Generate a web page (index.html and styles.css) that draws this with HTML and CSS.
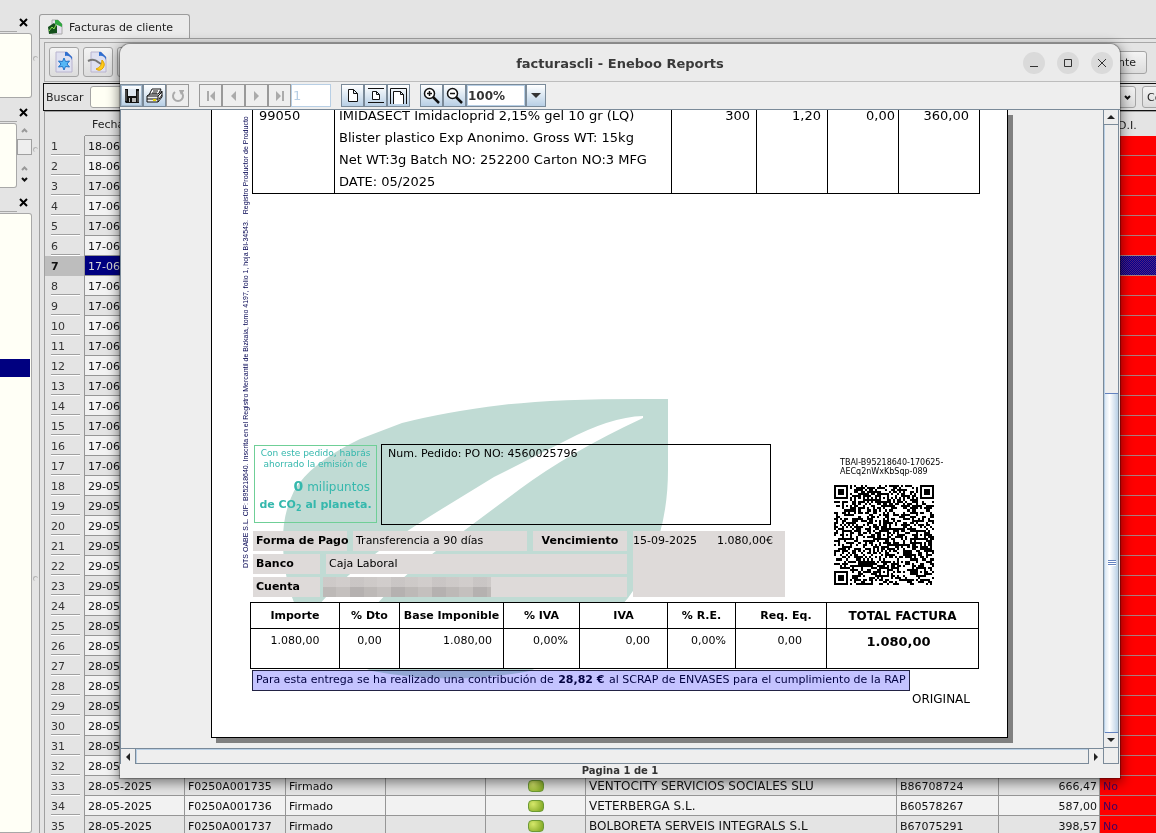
FILE: index.html
```html
<!DOCTYPE html>
<html lang="es">
<head>
<meta charset="utf-8">
<title>Facturas de cliente</title>
<link rel="stylesheet" href="styles.css">
</head>
<body>
<div class="desktop">
  <aside class="docks">
    <section class="dock dock-first">
      <header class="dock-head"><button class="dock-close" aria-label="Cerrar"><svg width="9" height="9" viewBox="0 0 9 9"><path d="M1 1l7 7M8 1l-7 7"/></svg></button></header>
      <div class="dock-row"><div class="dock-panel"></div></div>
    </section>
    <section class="dock dock-mid">
      <header class="dock-head"><button class="dock-close" aria-label="Cerrar"><svg width="9" height="9" viewBox="0 0 9 9"><path d="M1 1l7 7M8 1l-7 7"/></svg></button></header>
      <div class="dock-row">
        <div class="dock-panel"></div>
        <div class="mini-scroll">
          <svg width="7" height="5" viewBox="0 0 7 5"><path class="dim" d="M1 4l2.500-2.500L6 4"/></svg>
          <span class="mini-thumb"></span>
          <svg width="7" height="5" viewBox="0 0 7 5"><path class="dim" d="M1 4l2.500-2.500L6 4"/></svg>
          <svg width="7" height="5" viewBox="0 0 7 5"><path d="M1 1l2.500 2.500L6 1"/></svg>
        </div>
      </div>
    </section>
    <section class="dock dock-last">
      <header class="dock-head"><button class="dock-close" aria-label="Cerrar"><svg width="9" height="9" viewBox="0 0 9 9"><path d="M1 1l7 7M8 1l-7 7"/></svg></button></header>
      <div class="dock-row"><div class="dock-panel"><div class="dock-selected"></div></div></div>
    </section>
  </aside>
  <div class="splitter"><i></i><i></i><i></i></div>
  <main class="main">
    <div class="tabs">
      <button class="tab">
        <svg width="16" height="16" viewBox="0 0 16 16"><path d="M5 1h6l4 4v10H5z" fill="#e6e2ee" stroke="#aaa"/><path d="M8 1h3l4 4v3L8 5z" fill="#30a840"/><path d="M1 8l6-4 3 3v7l-8 1z" fill="#14501c"/><path d="M2 12l3-4 2 2 2-4" stroke="#8be04c" fill="none"/></svg>
        <span>Facturas de cliente</span>
      </button>
    </div>
    <div class="pane">
      <div class="actions">
        <button class="act" aria-label="Nuevo"><svg width="20" height="22" viewBox="0 0 20 22"><path d="M2 1h11l5 5v15H2z" fill="#dfe0f0" stroke="#b9b4cf"/><path d="M11 1h2l5 5v3q-2-5-7-4z" fill="#2f6fd0"/><path d="M10 7l1.500 3.500 4-.5-2.500 3 2.500 3-4-.5L10 19l-1.500-3.500-4 .5L7 13l-2.500-3 4 .5z" fill="#56b7f5" stroke="#2174c8"/></svg></button>
        <button class="act" aria-label="Editar"><svg width="22" height="22" viewBox="0 0 22 22"><path d="M4 1h10l5 5v15H4z" fill="#dfe0f0" stroke="#b9b4cf"/><path d="M12 1h2l5 5v3q-2-5-7-4z" fill="#2f6fd0"/><path d="M1 10q6-3 10 1l3 2" fill="none" stroke="#777" stroke-width="2"/><path d="M15 9q4 4 1 8t-7 1q6-2 6-9z" fill="#ffcc1c" stroke="#e0a400"/></svg></button>
        <button class="act" aria-label="Ver"></button>
        <button class="wide">nte</button>
      </div>
      <div class="search">
        <label for="buscar">Buscar</label>
        <input id="buscar" type="text">
        <button class="combo" aria-label="Campo"><svg width="7" height="5" viewBox="0 0 7 5"><path d="M1 1l2.500 2.500L6 1"/></svg></button>
        <button class="comun">Co</button>
      </div>
      <div class="grid-frame">
        <table class="records">
          <colgroup><col class="c-num"><col class="c-100"><col class="c-101"><col class="c-100"><col class="c-100"><col class="c-100"><col><col class="c-102"><col class="c-101"><col class="c-last"></colgroup>
          <thead><tr><th></th><th>Fecha</th><th></th><th></th><th></th><th></th><th></th><th></th><th></th><th class="di">D.I.</th></tr></thead>
          <tbody id="records-body"></tbody>
        </table>
      </div>
    </div>
  </main>

  <section class="window" aria-label="facturascli - Eneboo Reports">
    <header class="titlebar">
      <h1>facturascli - Eneboo Reports</h1>
      <div class="winctl">
        <button aria-label="Minimizar"><svg width="10" height="10" viewBox="0 0 10 10"><path d="M1 8.500h8"/></svg></button>
        <button aria-label="Maximizar"><svg width="10" height="10" viewBox="0 0 10 10"><path d="M1.500 1.500h7v7h-7z"/></svg></button>
        <button aria-label="Cerrar"><svg width="10" height="10" viewBox="0 0 10 10"><path d="M1 1l8 8M9 1l-8 8"/></svg></button>
      </div>
    </header>
    <div class="toolbar">
      <div class="group">
        <button class="tool focus" aria-label="Guardar"><svg width="16" height="16" viewBox="0 0 16 16"><path d="M1 1h14v14H2l-1-1z" fill="#111"/><path d="M4 1h8v7H4z" fill="#dfe7f0"/><path d="M5 10h7v4H5z" fill="#bbb"/><path d="M6 10h2v4H6z" fill="#111"/><path d="M2 2v11M14 3v11" stroke="#777"/></svg></button>
        <button class="tool" aria-label="Imprimir"><svg width="18" height="16" viewBox="0 0 18 16"><path d="M6 1h9l-3 6H3z" fill="#fff" stroke="#111"/><path d="M7 3h5M6 5h5" stroke="#111"/><path d="M1 8l3-2h8l4-3v6l-4 5H1z" fill="#eee" stroke="#111"/><path d="M1 8h11v6M12 8l4-4M1 11h11M13 11l3-4" stroke="#111" fill="none"/><path d="M7 12h3" stroke="#e5d400" stroke-width="2"/></svg></button>
        <button class="tool off" disabled aria-label="Recargar"><svg width="14" height="14" viewBox="0 0 14 14"><path d="M4 3a5 5 0 1 0 6 0" fill="none" stroke="#aaa" stroke-width="2"/><path d="M8 1h5v1l-3 4z" fill="#aaa"/></svg></button>
      </div>
      <div class="group">
        <button class="tool off" disabled aria-label="Primera"><svg width="10" height="10" viewBox="0 0 10 10"><path d="M1 0h2v10H1zM9 0v10L4 5z" fill="#aaa"/></svg></button>
        <button class="tool off" disabled aria-label="Anterior"><svg width="10" height="10" viewBox="0 0 10 10"><path d="M7 0v10L2 5z" fill="#aaa"/></svg></button>
        <button class="tool off" disabled aria-label="Siguiente"><svg width="10" height="10" viewBox="0 0 10 10"><path d="M2 0v10l5-5z" fill="#aaa"/></svg></button>
        <button class="tool off" disabled aria-label="Última"><svg width="10" height="10" viewBox="0 0 10 10"><path d="M7 0h2v10H7zM1 0v10l5-5z" fill="#aaa"/></svg></button>
        <input class="page-no" type="text" value="1" disabled aria-label="Página">
      </div>
      <div class="group">
        <button class="tool" aria-label="Tamaño real"><svg width="12" height="15" viewBox="0 0 12 15"><path d="M1.500 1.500h5l4 4v8h-9zM6.500 1.500v4h4" fill="#fff" stroke="#111"/></svg></button>
        <button class="tool" aria-label="Ajustar página"><svg width="16" height="17" viewBox="0 0 16 17"><path d="M0 1.500h16M0 15.500h16" stroke="#111"/><path d="M4.500 4.500h4l3 3v5h-7zM8.500 4.500v3h3" fill="#fff" stroke="#111"/></svg></button>
        <button class="tool" aria-label="Ajustar ancho"><svg width="17" height="17" viewBox="0 0 17 17"><path d="M.5 17V1.500h16V17" fill="none" stroke="#111"/><path d="M3.500 17V4.500h7l3 3V17M10.500 4.500v3h3" fill="#fff" stroke="#111"/></svg></button>
      </div>
      <div class="group">
        <button class="tool" aria-label="Ampliar"><svg width="17" height="17" viewBox="0 0 17 17"><circle cx="6.500" cy="6.500" r="5" fill="#fff" stroke="#111" stroke-width="1.500"/><path d="M4 6.500h5M6.500 4v5" stroke="#111" stroke-width="1.500"/><path d="M10 10l6 6" stroke="#111" stroke-width="2.500"/></svg></button>
        <button class="tool" aria-label="Reducir"><svg width="17" height="17" viewBox="0 0 17 17"><circle cx="6.500" cy="6.500" r="5" fill="#fff" stroke="#111" stroke-width="1.500"/><path d="M4 6.500h5" stroke="#111" stroke-width="1.500"/><path d="M10 10l6 6" stroke="#111" stroke-width="2.500"/></svg></button>
        <input class="zoom-val" type="text" value="100%" aria-label="Zoom">
        <button class="tool drop" aria-label="Elegir zoom"><svg width="10" height="5" viewBox="0 0 10 5"><path d="M0 0h10L5 5z" fill="#333"/></svg></button>
      </div>
    </div>

    <div class="scroll-grid">
      <div class="viewport">
        <article class="sheet">
          <svg class="leaf" width="795" height="627" viewBox="212 110 795 627" aria-hidden="true">
            <path fill="#c0dbd4" fill-rule="evenodd" d="M668 399Q560 398 502 405Q445 412 402 423L360 439Q310 463 294 491Q282 515 283 545Q284 590 305 625Q340 660 372 671Q450 686 530 671Q590 645 628 598Q668 545 668 470zM643 416Q610 417 565 441L494 477L445 507Q350 565 315 610L370 612Q400 575 465 530L520 489Q570 452 643 418z"/>
          </svg>
          <p class="registry">DTS OABE S.L. CIF: B95218640. Inscrita en el Registro Mercantil de Bizkaia, tomo 4197, folio 1, hoja BI-34543. &nbsp; Registro Productor de Producto</p>
          <div class="report">
            <table class="items">
              <colgroup><col class="i-ref"><col class="i-desc"><col class="i-qty"><col class="i-mid"><col class="i-mid"><col class="i-sum"></colgroup>
              <tbody><tr>
                <td>99050</td>
                <td class="desc">IMIDASECT Imidacloprid 2,15% gel 10 gr (LQ)<br>Blister plastico Exp Anonimo. Gross WT: 15kg<br>Net WT:3g Batch NO: 252200 Carton NO:3 MFG<br>DATE: 05/2025</td>
                <td class="num">300</td><td class="num">1,20</td><td class="num near">0,00</td><td class="num sum">360,00</td>
              </tr></tbody>
            </table>
            <div class="details">
              <div class="details-left">
                <div class="notes">
                  <div class="co2">
                    <p>Con este pedido, habrás<br>ahorrado la emisión de</p>
                    <p class="co2-val"><b>0</b> milipuntos</p>
                    <p class="co2-end">de CO<sub>2</sub> al planeta.</p>
                  </div>
                  <div class="order">Num. Pedido: PO NO: 4560025796</div>
                </div>
                <div class="payment">
                  <div class="pay-rows">
                    <div class="pay-row"><b class="cell form">Forma de Pago</b><span class="cell grow">Transferencia a 90 días</span><b class="cell due">Vencimiento</b></div>
                    <div class="pay-row"><b class="cell lab">Banco</b><span class="cell grow">Caja Laboral</span></div>
                    <div class="pay-row"><b class="cell lab">Cuenta</b><span class="cell grow account"><i class="mosaic"></i></span></div>
                  </div>
                  <div class="cell schedule"><span>15-09-2025</span><span>1.080,00€</span></div>
                </div>
              </div>
              <div class="tbai">
                <p>TBAI-B95218640-170625-<br>AECq2nWxKbSqp-089</p>
                <svg id="qr" width="100" height="100" viewBox="0 0 49 49" shape-rendering="crispEdges" role="img" aria-label="Código QR"></svg>
              </div>
            </div>
            <table class="totals">
              <colgroup><col class="t1"><col class="t2"><col class="t3"><col class="t4"><col class="t5"><col class="t6"><col class="t7"><col></colgroup>
              <thead><tr><th>Importe</th><th>% Dto</th><th>Base Imponible</th><th>% IVA</th><th>IVA</th><th>% R.E.</th><th class="req">Req. Eq.</th><th class="big">TOTAL FACTURA</th></tr></thead>
              <tbody><tr><td class="ctr">1.080,00</td><td class="ctr">0,00</td><td>1.080,00</td><td>0,00%</td><td class="iva">0,00</td><td class="re">0,00%</td><td class="rq">0,00</td><td class="grand">1.080,00</td></tr></tbody>
            </table>
            <p class="scrap">Para esta entrega se ha realizado una contribución de <b>28,82 €</b> al SCRAP de ENVASES para el cumplimiento de la RAP</p>
            <p class="original">ORIGINAL</p>
          </div>
        </article>
      </div>
      <div class="vbar">
        <button class="arrow" aria-label="Subir"><svg width="8" height="4" viewBox="0 0 8 4"><path d="M0 4h8L4 0z" fill="#222"/></svg></button>
        <div class="vtrack"><div class="vthumb"><i></i></div></div>
        <button class="arrow" aria-label="Bajar"><svg width="8" height="4" viewBox="0 0 8 4"><path d="M0 0h8L4 4z" fill="#222"/></svg></button>
      </div>
      <div class="hbar">
        <button class="arrow" aria-label="Izquierda"><svg width="4" height="8" viewBox="0 0 4 8"><path d="M4 0v8L0 4z" fill="#222"/></svg></button>
        <div class="htrack"></div>
        <button class="arrow" aria-label="Derecha"><svg width="4" height="8" viewBox="0 0 4 8"><path d="M0 0v8l4-4z" fill="#222"/></svg></button>
      </div>
      <div class="corner"></div>
    </div>
    <footer class="status">Pagina 1 de 1</footer>
  </section>
</div>
<script src="script.js"></script>
</body>
</html>
```
FILE: styles.css
```css
* { box-sizing: border-box; }
body { margin: 0; height: 100vh; overflow: hidden; background: #e4e4e4; color: #222; font: 11px "DejaVu Sans", sans-serif; }
button, input { font: inherit; color: inherit; margin: 0; padding: 0; }
button { display: flex; align-items: center; justify-content: center; border: 0; background: none; }
p, h1 { margin: 0; }
svg { flex: none; }

.desktop { position: relative; display: flex; height: 100vh; overflow: hidden; }

/* Left docks */
.docks { display: flex; flex-direction: column; width: 32px; }
.dock { display: flex; flex-direction: column; }
.dock-mid { height: 90px; }
.dock-first { height: 98px; padding-top: 8px; }
.dock-last { flex: 1; }
.dock-head { display: flex; justify-content: flex-end; align-items: center; height: 25px; padding: 4px 4px 0 0; background: linear-gradient(#a8a8a8, #a8a8a8) 0 23px / 17px 1px no-repeat; }
.dock-close path { stroke: #000; stroke-width: 2; fill: none; }
.dock-row { flex: 1; display: flex; }
.dock-panel { flex: 1; background: #fffff6; border: 1px solid #a8a8a8; border-width: 1px 1px 1px 0; border-radius: 0 3px 3px 0; }
.dock-selected { height: 18px; margin: 145px 1px 0 0; background: #000080; }
.mini-scroll { width: 15px; display: flex; flex-direction: column; align-items: center; justify-content: space-between; padding: 5px 0 6px; }
.mini-scroll path, .combo path { fill: none; stroke: #111; stroke-width: 2; }
.mini-scroll .dim { stroke: #999; }
.mini-thumb { width: 15px; height: 16px; border: 1px solid #a0a0a0; background: #eee; margin-bottom: 4px; }
.splitter { width: 7px; display: flex; flex-direction: column; }
.splitter i { width: 5px; height: 5px; border: 1px solid #b4b4b4; border-width: 1px 0 0 1px; border-radius: 3px; margin: 56px 0 30px 1px; }
.splitter i:nth-child(3) { margin-top: 394px; }

/* Main form */
.main { flex: 1; min-width: 0; display: flex; flex-direction: column; padding-top: 14px; }
.tabs { display: flex; height: 25px; margin-bottom: -1px; }
.tab { width: 151px; gap: 6px; justify-content: flex-start; padding-left: 7px; border: 1px solid #9c9c9c; border-bottom: 0; border-radius: 3px 3px 0 0; background: #ebebeb; }
.pane { flex: 1; min-height: 0; display: flex; flex-direction: column; border: 1px solid #a0a0a0; border-width: 1px 0 0 1px; padding: 3px 0 0 3px; }
.actions { display: flex; align-items: center; gap: 4px; height: 40px; border: 1px solid #a8a8a8; border-right: 0; padding: 0 9px 0 4px; margin-left: 1px; }
.act, .wide, .combo, .comun { border: 1px solid #a4a4a4; border-radius: 3px; background: linear-gradient(#f4f4f4, #dcdcdc); }
.act { width: 30px; height: 30px; }
.wide { margin-left: auto; width: 60px; height: 23px; justify-content: flex-end; padding-right: 10px; }
.search { display: flex; align-items: center; height: 28px; margin-top: 1px; border: 1px solid #111; border-right: 0; padding-left: 2px; overflow: hidden; }
.search label { width: 44px; }
.search input { flex: 1; min-width: 0; height: 22px; border: 1px solid #a4a4a4; border-radius: 3px; background: #fffff4; }
.combo { width: 36px; height: 22px; justify-content: flex-end; padding-right: 4px; }
.comun { width: 40px; height: 22px; margin: 0 -26px 0 6px; justify-content: flex-start; padding-left: 4px; }
.grid-frame { flex: 1; min-height: 0; overflow: hidden; margin: 0 0 0 1px; border: 1px solid #a0a0a0; border-width: 1px 0 0 1px; }
.records { width: 100%; table-layout: fixed; border-collapse: separate; border-spacing: 0; }
.c-num { width: 40px; } .c-100 { width: 100px; } .c-101 { width: 101px; } .c-102 { width: 102px; } .c-last { width: 56px; }
.records th { height: 24px; padding: 2px 0 0 7px; font-weight: normal; text-align: left; border-bottom: 1px solid #9a9a9a; }
.records th:first-child { border-bottom: 0; }
.records th.di { padding-left: 18px; border-bottom: 0; }
.records td { height: 20px; padding: 1px 3px 0; white-space: nowrap; color: #111; border-bottom: 1px solid #969696; border-right: 1px solid #969696; background: #e4e4e4; overflow: hidden; }
.records tr:nth-child(even) td { background: #f2f2f2; }
.records tr td:first-child, .records tr:nth-child(even) td:first-child { padding-left: 6px; color: #333; border-bottom: 0; background: linear-gradient(#a0a0a0, #a0a0a0) 6px 18px / 29px 1px no-repeat, linear-gradient(#fff, #fff) 6px 19px / 29px 1px no-repeat, #e4e4e4; }
.records tr.current td { background: #000080; color: #ddd; }
.records tr.current td:first-child { background: #bdbdbd; color: #111; font-weight: bold; }
.records td.customer { font-size: 12px; line-height: 13px; }
.records tbody td.flag, .records tr:nth-child(even) td.flag { background: #f00; color: #400060; border-bottom-color: #a88080; border-right: 0; }
.records tbody tr.current td.flag { background: repeating-conic-gradient(#000090 0 25%, #502080 0 50%) 0 0 / 2px 2px; }
.records .amount { text-align: right; padding-right: 2px; }
.pill { display: block; width: 16px; height: 12px; margin: auto; border: 1px solid #6c9a34; border-radius: 4px; background: radial-gradient(circle at 30% 30%, #d6e86a, #8aae2c 80%); }

/* Report window */
.window { position: absolute; left: 120px; right: 36px; top: 44px; bottom: 55px; display: flex; flex-direction: column; background: #eee; border-radius: 10px 10px 0 0; box-shadow: 0 0 1px 1px rgba(0,0,0,.3), 0 3px 12px 2px rgba(0,0,0,.45); overflow: hidden; }
.titlebar { position: relative; display: flex; align-items: center; justify-content: center; height: 38px; padding-top: 2px; border-bottom: 1px solid #bdbdbd; background: #ebebeb; }
.titlebar h1 { font-size: 13px; line-height: 18px; color: #3a3a3a; }
.winctl { position: absolute; right: 7px; top: 8px; display: flex; gap: 12px; }
.winctl button { width: 22px; height: 22px; border-radius: 50%; background: #dadada; }
.winctl path { fill: none; stroke: #333; }
.toolbar { display: flex; gap: 10px; height: 28px; padding-top: 2px; border-bottom: 1px solid #7a8a99; }
.group { display: flex; height: 23px; }
.tool { width: 23px; height: 23px; border: 1px solid #7a8a99; background: linear-gradient(#fff, #e2ecf5 40%, #b8cfe5); }
.tool.off { border-color: #999; background: #eee; }
.tool.focus { box-shadow: inset 0 0 0 1px #a3b8cc; }
.page-no { width: 40px; border: 1px solid #b8cfe5; background: #fff; color: #b8cfe5; padding-left: 1px; font-size: 13px; }
.zoom-val { width: 60px; border: 1px solid #7a8a99; background: #fff; color: #333; padding-left: 1px; font: bold 12px "DejaVu Sans", sans-serif; box-shadow: inset 0 0 0 1px #b8cfe5; }
.drop { width: 20px; }
.scroll-grid { flex: 1; min-height: 0; display: grid; grid-template: minmax(0, 1fr) 16px / minmax(0, 1fr) 16px; border-left: 1px solid #7a8a99; margin-right: 1px; }
.viewport { overflow: hidden; padding: 0 5px 10px 0; }
.vbar { display: flex; flex-direction: column; border: 1px solid #7a8a99; border-width: 0 1px; }
.hbar { display: flex; border: 1px solid #7a8a99; border-width: 1px 0; }
.arrow { width: 15px; height: 15px; background: #eee; }
.vbar .arrow { width: 14px; border-bottom: 1px solid #7a8a99; }
.hbar .arrow:first-child { border-right: 1px solid #7a8a99; }
.hbar .arrow:last-child { border-left: 1px solid #7a8a99; }
.vtrack { flex: 1; display: flex; flex-direction: column; justify-content: flex-end; border-left: 1px solid #b8cfe5; }
.vthumb { height: 56%; display: flex; align-items: center; justify-content: center; border: 1px solid #6382bf; border-width: 1px 0; background: linear-gradient(90deg, #dce8f3, #fff 35%, #b8cfe5); }
.vthumb i { width: 8px; height: 6px; background: repeating-linear-gradient(#6382bf 0 1px, #fff 1px 2px); }
.htrack { flex: 1; border: 1px solid #b8cfe5; border-width: 1px 0 0 1px; }
.corner { border: 1px solid #7a8a99; border-width: 0 1px 1px; }
.status { height: 14px; line-height: 14px; text-align: center; font-weight: bold; font-size: 10px; color: #333; }

/* Invoice page */
.sheet { position: relative; display: flex; width: 797px; height: 100%; margin: 0 auto; background: #fff; border: 1px solid #000; border-top: 0; box-shadow: 5px 5px 0 #808080; color: #000; }
.leaf { position: absolute; left: 0; top: 0; }
.registry { width: 38px; height: 458px; padding-right: 28px; writing-mode: vertical-rl; transform: rotate(180deg); font: 7px/11px "Liberation Sans", sans-serif; color: #000050; white-space: nowrap; }
.report { position: relative; flex: 1; padding-right: 27px; }
.report td, .report th { padding: 0; }
.report .items { width: 728px; margin: -5px 0 0 2px; table-layout: fixed; border-collapse: collapse; font-size: 13px; line-height: 22px; border-bottom: 1px solid #000; }
.report .items td { border: 1px solid #000; border-width: 0 1px; vertical-align: top; padding: 0 6px; }
.report .items .desc { padding: 0 4px; white-space: nowrap; }
.i-ref { width: 82px; } .i-desc { width: 337px; } .i-qty { width: 85px; } .i-mid { width: 71px; } .i-sum { width: 81px; }
.report .items .num { text-align: right; }
.report .items .near { padding-right: 3px; }
.report .items .sum { padding-right: 10px; }
.details { display: flex; justify-content: space-between; padding: 250px 40px 0 4px; }
.details-left { width: 532px; }
.notes { display: flex; align-items: flex-start; gap: 4px; }
.co2 { width: 123px; height: 78px; margin-top: 1px; border: 1px solid #6fcf97; color: #35b8ad; font-size: 9px; line-height: 11px; text-align: center; padding-top: 2px; white-space: nowrap; }
.co2-val { font-size: 12px; line-height: 20px; margin-top: 6px; text-align: right; padding-right: 6px; }
.co2-val b { font-size: 14px; }
.co2-end { font-weight: bold; font-size: 11px; line-height: 16px; }
.co2-end sub { font-size: 8px; line-height: 0; }
.order { width: 390px; height: 81px; border: 1px solid #000; padding: 2px 6px; line-height: 14px; }
.payment { display: flex; gap: 6px; margin: 6px 0 0 -1px; }
.pay-rows { width: 374px; display: flex; flex-direction: column; gap: 3px; }
.pay-row { display: flex; gap: 6px; }
.cell { background: #dedad9; height: 20px; line-height: 20px; padding: 0 3px; white-space: nowrap; }
.form { width: 94px; } .lab { width: 67px; } .due { width: 94px; text-align: center; }
.grow { flex: 1; }
.account { padding: 0; }
.mosaic { display: block; width: 168px; height: 20px; margin-left: -3px; background: linear-gradient(rgba(222,218,217,.5) 0 10px, transparent 10px), repeating-linear-gradient(90deg, #bdb9b7 0 13px, #c4c0be 13px 27px, #b5b1b0 27px 41px); }
.schedule { width: 152px; height: 66px; display: flex; justify-content: space-between; padding: 0 12px 0 0; }
.tbai { width: 106px; padding-top: 14px; font-size: 8px; line-height: 9px; white-space: nowrap; }
.tbai p { padding-left: 6px; }
.tbai svg { display: block; margin-top: 9px; }
.totals { position: relative; width: 729px; margin-top: 5px; table-layout: fixed; border-collapse: collapse; background: #fff; white-space: nowrap; }
.report .totals th, .report .totals td { border: 1px solid #000; font-size: 11px; }
.totals th { height: 26px; }
.report .totals td { height: 40px; vertical-align: top; padding: 5px 11px 0 0; text-align: right; }
.report .totals .big { font-size: 12px; }
.report .totals .ctr { text-align: center; padding-right: 0; }
.report .totals .iva { padding-right: 17px; }
.report .totals .re { padding-right: 9px; }
.report .totals .rq { padding-right: 24px; }
.report .totals .req { padding-left: 10px; }
.report .totals .grand { font-weight: bold; font-size: 13px; text-align: center; padding: 5px 8px 0 0; }
.t1 { width: 89px; } .t2 { width: 60px; } .t3 { width: 104px; } .t4 { width: 76px; } .t5 { width: 88px; } .t6 { width: 68px; } .t7 { width: 91px; }
.scrap { width: 658px; height: 21px; margin: 1px 0 0 2px; border: 1px solid #222244; background: #c4c3ff; mix-blend-mode: multiply; color: #000040; line-height: 18px; padding-left: 3px; white-space: nowrap; }
.scrap b { margin: 0 1px; }
.original { text-align: right; font-size: 12px; line-height: 16px; padding-right: 10px; }
```
FILE: script.js
```javascript
const body = document.getElementById("records-body");
const bottom = {
  33: ["28-05-2025", "F0250A001735", "Firmado", "VENTOCITY SERVICIOS SOCIALES SLU", "B86708724", "666,47"],
  34: ["28-05-2025", "F0250A001736", "Firmado", "VETERBERGA S.L.", "B60578267", "587,00"],
  35: ["28-05-2025", "F0250A001737", "Firmado", "BOLBORETA SERVEIS INTEGRALS S.L", "B67075291", "398,57"]
};
const dateFor = n => n < 3 ? "18-06-2025" : n < 18 ? "17-06-2025" : n < 24 ? "29-05-2025" : "28-05-2025";
for (let n = 1; n <= 35; n++) {
  const r = bottom[n] || [dateFor(n), "", "", "", "", ""];
  const tr = document.createElement("tr");
  if (n === 7) tr.className = "current";
  const pill = bottom[n] ? '<span class="pill"></span>' : "";
  tr.innerHTML = `<td>${n}</td><td>${r[0]}</td><td>${r[1]}</td><td>${r[2]}</td><td></td><td>${pill}</td><td class="customer">${r[3]}</td><td>${r[4]}</td><td class="amount">${r[5]}</td><td class="flag">${bottom[n] ? "No" : ""}</td>`;
  body.appendChild(tr);
}

// QR symbol, 49 modules per side
const N = 49;
let seed = 20259;
const rnd = () => (seed = (seed * 1103515245 + 12345) % 2147483648) / 2147483648;
const m = Array.from({ length: N }, () => Array.from({ length: N }, () => rnd() > 0.5));
const ring = (cx, cy, size, dark) => {
  for (let y = -size; y <= size; y++) for (let x = -size; x <= size; x++) {
    const px = cx + x, py = cy + y;
    if (px >= 0 && py >= 0 && px < N && py < N) m[py][px] = dark(Math.max(Math.abs(x), Math.abs(y)));
  }
};
[[3, 3], [45, 3], [3, 45]].forEach(p => ring(p[0], p[1], 4, d => d < 2 || d === 3));
for (let i = 8; i < 41; i++) { m[6][i] = i % 2 === 0; m[i][6] = i % 2 === 0; }
[[24, 6], [6, 24], [24, 24], [42, 24], [24, 42], [42, 42]].forEach(p => ring(p[0], p[1], 2, d => d !== 1));
let d = "";
m.forEach((row, y) => row.forEach((on, x) => { if (on) d += `M${x} ${y}h1v1h-1z`; }));
const path = document.createElementNS("http://www.w3.org/2000/svg", "path");
path.setAttribute("d", d);
document.getElementById("qr").appendChild(path);
```
